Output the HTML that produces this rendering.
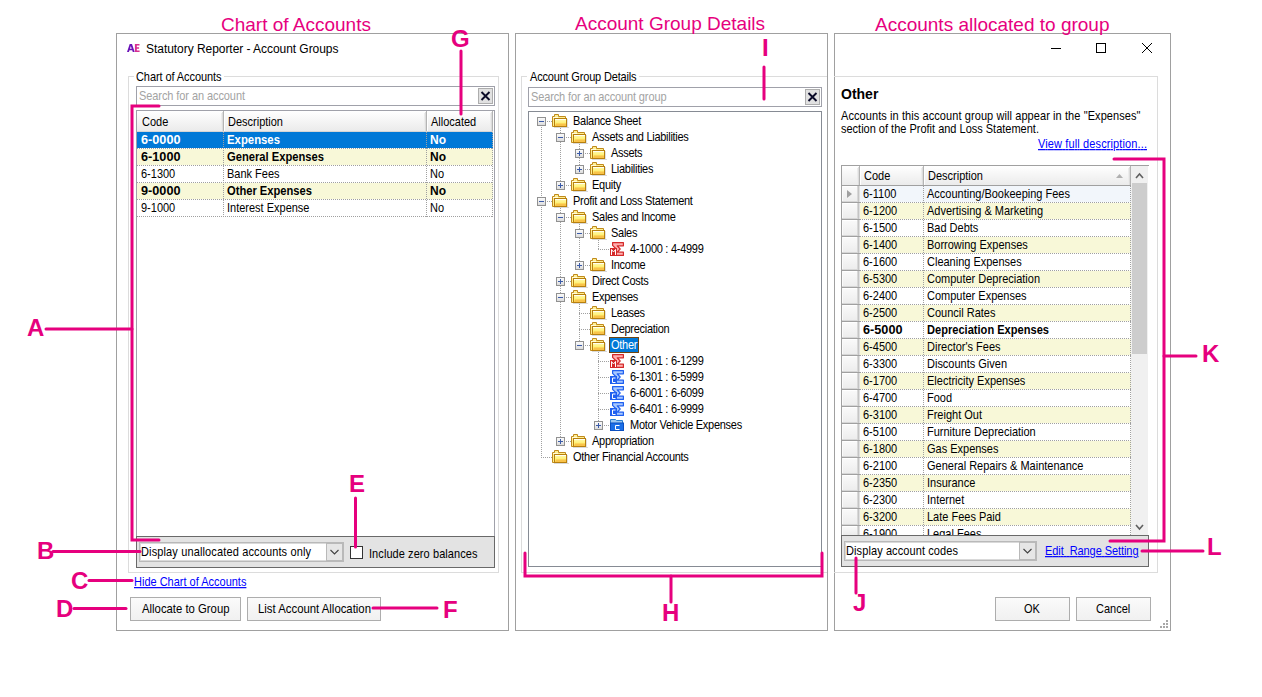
<!DOCTYPE html><html><head><meta charset="utf-8"><style>html,body{margin:0;padding:0;background:#fff;overflow:hidden}svg{display:block}text{font-family:"Liberation Sans",sans-serif;white-space:pre;text-decoration-skip-ink:none}</style></head><body>
<svg width="1262" height="697" viewBox="0 0 1262 697">
<defs><linearGradient id="btn" x1="0" y1="0" x2="0" y2="1"><stop offset="0" stop-color="#fbfbfb"/><stop offset="1" stop-color="#f0f0f0"/></linearGradient><linearGradient id="hdr" x1="0" y1="0" x2="0" y2="1"><stop offset="0" stop-color="#ffffff"/><stop offset="1" stop-color="#ebebeb"/></linearGradient><linearGradient id="rh" x1="0" y1="0" x2="0" y2="1"><stop offset="0" stop-color="#fafafa"/><stop offset="1" stop-color="#ececec"/></linearGradient><linearGradient id="exp" x1="0" y1="0" x2="0" y2="1"><stop offset="0" stop-color="#ffffff"/><stop offset="1" stop-color="#d8d8d8"/></linearGradient><linearGradient id="fold" x1="0" y1="0" x2="0" y2="1"><stop offset="0" stop-color="#fffbb8"/><stop offset="0.6" stop-color="#fff070"/><stop offset="1" stop-color="#f5c040"/></linearGradient><linearGradient id="ae" x1="0" y1="0" x2="1" y2="0"><stop offset="0" stop-color="#5a0fb4"/><stop offset="1" stop-color="#e03c8c"/></linearGradient></defs>
<rect width="1262" height="697" fill="#fff"/>
<rect x="116" y="33" width="393" height="1" fill="#a0a0a0" />
<rect x="116" y="630" width="393" height="1" fill="#a0a0a0" />
<rect x="116" y="33" width="1" height="598" fill="#a0a0a0" />
<rect x="508" y="33" width="1" height="598" fill="#a0a0a0" />
<g transform="translate(127,44)"><path fill-rule="evenodd" fill="#6a12b8" d="M0,8 L2.7,0 L5,0 L7.7,8 L5.8,8 L5.2,6.3 L2.5,6.3 L1.9,8 Z M3,4.7 L4.7,4.7 L3.85,1.9 Z"/><path fill="#d82e90" d="M7.9,0 H12.5 V1.6 H9.8 V3.2 H12.1 V4.8 H9.8 V6.4 H12.6 V8 H7.9 Z"/></g>
<text x="146" y="53" font-size="12" fill="#000" textLength="192.5">Statutory Reporter - Account Groups</text>
<rect x="128" y="76" width="371" height="1" fill="#dcdcdc" />
<rect x="128" y="76" width="1" height="497" fill="#dcdcdc" />
<rect x="498" y="76" width="1" height="497" fill="#dcdcdc" />
<rect x="128" y="572" width="371" height="1" fill="#dcdcdc" />
<rect x="134" y="70" width="90" height="12" fill="#fff" />
<text transform="translate(136,81) scale(0.9167,1)" x="0" y="0" font-size="12" fill="#000" textLength="93.27">Chart of Accounts</text>
<rect x="136" y="86" width="359" height="20" fill="#fff" />
<rect x="136" y="86" width="359" height="1" fill="#a0a1aa" />
<rect x="136" y="105" width="359" height="1" fill="#a0a1aa" />
<rect x="136" y="86" width="1" height="20" fill="#a0a1aa" />
<rect x="494" y="86" width="1" height="20" fill="#a0a1aa" />
<text transform="translate(139,100) scale(0.9167,1)" x="0" y="0" font-size="12" fill="#a3a3a3" textLength="115.64">Search for an account</text>
<rect x="478" y="88" width="15" height="16" fill="#e1e1e1" />
<rect x="478" y="88" width="15" height="1" fill="#adadad" />
<rect x="478" y="103" width="15" height="1" fill="#adadad" />
<rect x="478" y="88" width="1" height="16" fill="#adadad" />
<rect x="492" y="88" width="1" height="16" fill="#adadad" />
<path d="M481.5,92.0 L489.5,100.0 M489.5,92.0 L481.5,100.0" stroke="#0a0a28" stroke-width="1.9"/>
<rect x="136" y="110" width="359" height="427" fill="#fff" />
<rect x="136" y="110" width="359" height="1" fill="#a0a1aa" />
<rect x="136" y="536" width="359" height="1" fill="#a0a1aa" />
<rect x="136" y="110" width="1" height="427" fill="#a0a1aa" />
<rect x="494" y="110" width="1" height="427" fill="#a0a1aa" />
<rect x="137" y="111" width="356" height="20" fill="url(#hdr)" />
<rect x="137" y="131" width="356" height="1" fill="#d5d5d5" />
<rect x="221" y="113" width="1" height="17" fill="#ececec" />
<rect x="222" y="112" width="1" height="19" fill="#dcdcdc" />
<rect x="223" y="111" width="1" height="20" fill="#b4b4b4" />
<rect x="224" y="112" width="1" height="19" fill="#ffffff" />
<rect x="424" y="113" width="1" height="17" fill="#ececec" />
<rect x="425" y="112" width="1" height="19" fill="#dcdcdc" />
<rect x="426" y="111" width="1" height="20" fill="#b4b4b4" />
<rect x="427" y="112" width="1" height="19" fill="#ffffff" />
<rect x="490" y="113" width="1" height="17" fill="#ececec" />
<rect x="491" y="112" width="1" height="19" fill="#dcdcdc" />
<rect x="492" y="111" width="1" height="20" fill="#b4b4b4" />
<rect x="493" y="112" width="1" height="19" fill="#ffffff" />
<text transform="translate(142,126) scale(0.9167,1)" x="0" y="0" font-size="12" fill="#000" >Code</text>
<text transform="translate(228,126) scale(0.9167,1)" x="0" y="0" font-size="12" fill="#000" >Description</text>
<text transform="translate(431,126) scale(0.9167,1)" x="0" y="0" font-size="12" fill="#000" >Allocated</text>
<rect x="137" y="132" width="356" height="16" fill="#0078d7" />
<line x1="137" y1="148.5" x2="493" y2="148.5" stroke="#a0a0a0" stroke-width="1" stroke-dasharray="1 1"/>
<text transform="translate(141,144) scale(0.9167,1)" x="0" y="0" font-size="12" fill="#fff" font-weight="bold" textLength="43.09" lengthAdjust="spacingAndGlyphs">6-0000</text>
<text transform="translate(227,144) scale(0.9167,1)" x="0" y="0" font-size="12" fill="#fff" font-weight="bold" textLength="57.82" lengthAdjust="spacingAndGlyphs">Expenses</text>
<text transform="translate(430,144) scale(0.9167,1)" x="0" y="0" font-size="12" fill="#fff" font-weight="bold" textLength="17.45" lengthAdjust="spacingAndGlyphs">No</text>
<rect x="137" y="149" width="356" height="16" fill="#f8f8d8" />
<line x1="137" y1="165.5" x2="493" y2="165.5" stroke="#a0a0a0" stroke-width="1" stroke-dasharray="1 1"/>
<text transform="translate(141,161) scale(0.9167,1)" x="0" y="0" font-size="12" fill="#000" font-weight="bold" textLength="43.09" lengthAdjust="spacingAndGlyphs">6-1000</text>
<text transform="translate(227,161) scale(0.9167,1)" x="0" y="0" font-size="12" fill="#000" font-weight="bold" textLength="105.82" lengthAdjust="spacingAndGlyphs">General Expenses</text>
<text transform="translate(430,161) scale(0.9167,1)" x="0" y="0" font-size="12" fill="#000" font-weight="bold" textLength="17.45" lengthAdjust="spacingAndGlyphs">No</text>
<rect x="137" y="166" width="356" height="16" fill="#fff" />
<line x1="137" y1="182.5" x2="493" y2="182.5" stroke="#a0a0a0" stroke-width="1" stroke-dasharray="1 1"/>
<text transform="translate(141,178) scale(0.9167,1)" x="0" y="0" font-size="12" fill="#000" >6-1300</text>
<text transform="translate(227,178) scale(0.9167,1)" x="0" y="0" font-size="12" fill="#000" >Bank Fees</text>
<text transform="translate(430,178) scale(0.9167,1)" x="0" y="0" font-size="12" fill="#000" >No</text>
<rect x="137" y="183" width="356" height="16" fill="#f8f8d8" />
<line x1="137" y1="199.5" x2="493" y2="199.5" stroke="#a0a0a0" stroke-width="1" stroke-dasharray="1 1"/>
<text transform="translate(141,195) scale(0.9167,1)" x="0" y="0" font-size="12" fill="#000" font-weight="bold" textLength="43.09" lengthAdjust="spacingAndGlyphs">9-0000</text>
<text transform="translate(227,195) scale(0.9167,1)" x="0" y="0" font-size="12" fill="#000" font-weight="bold" textLength="92.73" lengthAdjust="spacingAndGlyphs">Other Expenses</text>
<text transform="translate(430,195) scale(0.9167,1)" x="0" y="0" font-size="12" fill="#000" font-weight="bold" textLength="17.45" lengthAdjust="spacingAndGlyphs">No</text>
<rect x="137" y="200" width="356" height="16" fill="#fff" />
<line x1="137" y1="216.5" x2="493" y2="216.5" stroke="#a0a0a0" stroke-width="1" stroke-dasharray="1 1"/>
<text transform="translate(141,212) scale(0.9167,1)" x="0" y="0" font-size="12" fill="#000" >9-1000</text>
<text transform="translate(227,212) scale(0.9167,1)" x="0" y="0" font-size="12" fill="#000" >Interest Expense</text>
<text transform="translate(430,212) scale(0.9167,1)" x="0" y="0" font-size="12" fill="#000" >No</text>
<line x1="223.5" y1="132" x2="223.5" y2="217" stroke="#a0a0a0" stroke-width="1" stroke-dasharray="1 1"/>
<line x1="426.5" y1="132" x2="426.5" y2="217" stroke="#a0a0a0" stroke-width="1" stroke-dasharray="1 1"/>
<line x1="492.5" y1="132" x2="492.5" y2="217" stroke="#a0a0a0" stroke-width="1" stroke-dasharray="1 1"/>
<rect x="136" y="536" width="359" height="32" fill="#e3e3e3" />
<rect x="136" y="536" width="359" height="1" fill="#696969" />
<rect x="136" y="567" width="359" height="1" fill="#696969" />
<rect x="136" y="536" width="1" height="32" fill="#696969" />
<rect x="494" y="536" width="1" height="32" fill="#696969" />
<rect x="139" y="542" width="205" height="20" fill="#fff" />
<rect x="139" y="542" width="205" height="1" fill="#b9b9b9" />
<rect x="139" y="561" width="205" height="1" fill="#b9b9b9" />
<rect x="139" y="542" width="1" height="20" fill="#b9b9b9" />
<rect x="343" y="542" width="1" height="20" fill="#b9b9b9" />
<rect x="140" y="543" width="203" height="1" fill="#d9d9d9" />
<rect x="140" y="560" width="203" height="1" fill="#d9d9d9" />
<rect x="140" y="543" width="1" height="18" fill="#d9d9d9" />
<rect x="342" y="543" width="1" height="18" fill="#d9d9d9" />
<rect x="326" y="543" width="17" height="18" fill="#e6e6e6" />
<rect x="326" y="543" width="17" height="1" fill="#b9b9b9" />
<rect x="326" y="560" width="17" height="1" fill="#b9b9b9" />
<rect x="326" y="543" width="1" height="18" fill="#b9b9b9" />
<rect x="342" y="543" width="1" height="18" fill="#b9b9b9" />
<path d="M330.5,550.0 L334.5,554.0 L338.5,550.0" fill="none" stroke="#404040" stroke-width="1.1"/>
<text transform="translate(141,556) scale(0.9167,1)" x="0" y="0" font-size="12" fill="#000" textLength="185.45">Display unallocated accounts only</text>
<rect x="350" y="546" width="13" height="13" fill="#fff" />
<rect x="350" y="546" width="13" height="1" fill="#333333" />
<rect x="350" y="558" width="13" height="1" fill="#333333" />
<rect x="350" y="546" width="1" height="13" fill="#333333" />
<rect x="362" y="546" width="1" height="13" fill="#333333" />
<text transform="translate(369,558) scale(0.9167,1)" x="0" y="0" font-size="12" fill="#000" textLength="118.36">Include zero balances</text>
<text transform="translate(134,586) scale(0.9167,1)" x="0" y="0" font-size="12" fill="#0000ff" text-decoration="underline">Hide Chart of Accounts</text>
<rect x="130" y="597" width="111" height="24" fill="url(#btn)"/>
<rect x="130" y="597" width="111" height="1" fill="#adadad" />
<rect x="130" y="620" width="111" height="1" fill="#adadad" />
<rect x="130" y="597" width="1" height="24" fill="#adadad" />
<rect x="240" y="597" width="1" height="24" fill="#adadad" />
<text transform="translate(142,613) scale(0.9167,1)" x="0" y="0" font-size="12" fill="#000" textLength="95.45" lengthAdjust="spacingAndGlyphs">Allocate to Group</text>
<rect x="247" y="597" width="134" height="24" fill="url(#btn)"/>
<rect x="247" y="597" width="134" height="1" fill="#adadad" />
<rect x="247" y="620" width="134" height="1" fill="#adadad" />
<rect x="247" y="597" width="1" height="24" fill="#adadad" />
<rect x="380" y="597" width="1" height="24" fill="#adadad" />
<text transform="translate(258,613) scale(0.9167,1)" x="0" y="0" font-size="12" fill="#000" textLength="123.27" lengthAdjust="spacingAndGlyphs">List Account Allocation</text>
<rect x="515" y="33" width="313" height="1" fill="#a0a0a0" />
<rect x="515" y="630" width="313" height="1" fill="#a0a0a0" />
<rect x="515" y="33" width="1" height="598" fill="#a0a0a0" />
<rect x="827" y="33" width="1" height="598" fill="#a0a0a0" />
<rect x="521" y="76" width="306" height="1" fill="#dcdcdc" />
<rect x="521" y="76" width="1" height="497" fill="#dcdcdc" />
<rect x="521" y="572" width="306" height="1" fill="#dcdcdc" />
<rect x="527" y="70" width="112" height="12" fill="#fff" />
<text transform="translate(530,81) scale(0.9167,1)" x="0" y="0" font-size="12" fill="#000" textLength="116.18">Account Group Details</text>
<rect x="528" y="87" width="294" height="20" fill="#fff" />
<rect x="528" y="87" width="294" height="1" fill="#a0a1aa" />
<rect x="528" y="106" width="294" height="1" fill="#a0a1aa" />
<rect x="528" y="87" width="1" height="20" fill="#a0a1aa" />
<rect x="821" y="87" width="1" height="20" fill="#a0a1aa" />
<text transform="translate(531,101) scale(0.9167,1)" x="0" y="0" font-size="12" fill="#a3a3a3" textLength="147.82">Search for an account group</text>
<rect x="805" y="89" width="15" height="16" fill="#e1e1e1" />
<rect x="805" y="89" width="15" height="1" fill="#adadad" />
<rect x="805" y="104" width="15" height="1" fill="#adadad" />
<rect x="805" y="89" width="1" height="16" fill="#adadad" />
<rect x="819" y="89" width="1" height="16" fill="#adadad" />
<path d="M808.5,93.0 L816.5,101.0 M816.5,93.0 L808.5,101.0" stroke="#0a0a28" stroke-width="1.9"/>
<rect x="528" y="111" width="294" height="456" fill="#fff" />
<rect x="528" y="111" width="294" height="1" fill="#868b94" />
<rect x="528" y="566" width="294" height="1" fill="#868b94" />
<rect x="528" y="111" width="1" height="456" fill="#868b94" />
<rect x="821" y="111" width="1" height="456" fill="#868b94" />
<line x1="541.5" y1="121" x2="541.5" y2="457" stroke="#a0a0a0" stroke-width="1" stroke-dasharray="1 1"/>
<line x1="560.5" y1="128" x2="560.5" y2="186" stroke="#a0a0a0" stroke-width="1" stroke-dasharray="1 1"/>
<line x1="579.5" y1="144" x2="579.5" y2="170" stroke="#a0a0a0" stroke-width="1" stroke-dasharray="1 1"/>
<line x1="560.5" y1="208" x2="560.5" y2="442" stroke="#a0a0a0" stroke-width="1" stroke-dasharray="1 1"/>
<line x1="579.5" y1="224" x2="579.5" y2="266" stroke="#a0a0a0" stroke-width="1" stroke-dasharray="1 1"/>
<line x1="598.5" y1="240" x2="598.5" y2="250" stroke="#a0a0a0" stroke-width="1" stroke-dasharray="1 1"/>
<line x1="579.5" y1="304" x2="579.5" y2="346" stroke="#a0a0a0" stroke-width="1" stroke-dasharray="1 1"/>
<line x1="598.5" y1="352" x2="598.5" y2="426" stroke="#a0a0a0" stroke-width="1" stroke-dasharray="1 1"/>
<line x1="541" y1="121.5" x2="552" y2="121.5" stroke="#a0a0a0" stroke-width="1" stroke-dasharray="1 1"/>
<rect x="537" y="117" width="9" height="9" fill="url(#exp)"/>
<rect x="537" y="117" width="9" height="1" fill="#919191" />
<rect x="537" y="125" width="9" height="1" fill="#919191" />
<rect x="537" y="117" width="1" height="9" fill="#919191" />
<rect x="545" y="117" width="1" height="9" fill="#919191" />
<rect x="539" y="121" width="5" height="1" fill="#3b5ba8" />
<g transform="translate(552,114)"><rect x="2" y="13" width="15" height="1" fill="#000" opacity="0.15"/><rect x="15" y="5" width="1" height="8" fill="#000" opacity="0.12"/><path d="M0.5,2.5 h2 v-2 h4 v2 h7 v10 h-13 z" fill="#ffef90" stroke="#c08a1c" stroke-width="1"/><rect x="1" y="3" width="5" height="1" fill="#fffbe0"/><rect x="2.5" y="4.5" width="12" height="8" fill="url(#fold)" stroke="#b8800e" stroke-width="1"/><rect x="3" y="5" width="11" height="1" fill="#fffef0"/><rect x="4" y="9.5" width="10" height="2.5" fill="#f9c34a"/></g>
<text transform="translate(573,125) scale(0.9167,1)" x="0" y="0" font-size="12" fill="#000" letter-spacing="-0.3">Balance Sheet</text>
<line x1="560" y1="137.5" x2="571" y2="137.5" stroke="#a0a0a0" stroke-width="1" stroke-dasharray="1 1"/>
<rect x="556" y="133" width="9" height="9" fill="url(#exp)"/>
<rect x="556" y="133" width="9" height="1" fill="#919191" />
<rect x="556" y="141" width="9" height="1" fill="#919191" />
<rect x="556" y="133" width="1" height="9" fill="#919191" />
<rect x="564" y="133" width="1" height="9" fill="#919191" />
<rect x="558" y="137" width="5" height="1" fill="#3b5ba8" />
<g transform="translate(571,130)"><rect x="2" y="13" width="15" height="1" fill="#000" opacity="0.15"/><rect x="15" y="5" width="1" height="8" fill="#000" opacity="0.12"/><path d="M0.5,2.5 h2 v-2 h4 v2 h7 v10 h-13 z" fill="#ffef90" stroke="#c08a1c" stroke-width="1"/><rect x="1" y="3" width="5" height="1" fill="#fffbe0"/><rect x="2.5" y="4.5" width="12" height="8" fill="url(#fold)" stroke="#b8800e" stroke-width="1"/><rect x="3" y="5" width="11" height="1" fill="#fffef0"/><rect x="4" y="9.5" width="10" height="2.5" fill="#f9c34a"/></g>
<text transform="translate(592,141) scale(0.9167,1)" x="0" y="0" font-size="12" fill="#000" letter-spacing="-0.3">Assets and Liabilities</text>
<line x1="579" y1="153.5" x2="590" y2="153.5" stroke="#a0a0a0" stroke-width="1" stroke-dasharray="1 1"/>
<rect x="575" y="149" width="9" height="9" fill="url(#exp)"/>
<rect x="575" y="149" width="9" height="1" fill="#919191" />
<rect x="575" y="157" width="9" height="1" fill="#919191" />
<rect x="575" y="149" width="1" height="9" fill="#919191" />
<rect x="583" y="149" width="1" height="9" fill="#919191" />
<rect x="577" y="153" width="5" height="1" fill="#3b5ba8" />
<rect x="579" y="151" width="1" height="5" fill="#3b5ba8" />
<g transform="translate(590,146)"><rect x="2" y="13" width="15" height="1" fill="#000" opacity="0.15"/><rect x="15" y="5" width="1" height="8" fill="#000" opacity="0.12"/><path d="M0.5,2.5 h2 v-2 h4 v2 h7 v10 h-13 z" fill="#ffef90" stroke="#c08a1c" stroke-width="1"/><rect x="1" y="3" width="5" height="1" fill="#fffbe0"/><rect x="2.5" y="4.5" width="12" height="8" fill="url(#fold)" stroke="#b8800e" stroke-width="1"/><rect x="3" y="5" width="11" height="1" fill="#fffef0"/><rect x="4" y="9.5" width="10" height="2.5" fill="#f9c34a"/></g>
<text transform="translate(611,157) scale(0.9167,1)" x="0" y="0" font-size="12" fill="#000" letter-spacing="-0.3">Assets</text>
<line x1="579" y1="169.5" x2="590" y2="169.5" stroke="#a0a0a0" stroke-width="1" stroke-dasharray="1 1"/>
<rect x="575" y="165" width="9" height="9" fill="url(#exp)"/>
<rect x="575" y="165" width="9" height="1" fill="#919191" />
<rect x="575" y="173" width="9" height="1" fill="#919191" />
<rect x="575" y="165" width="1" height="9" fill="#919191" />
<rect x="583" y="165" width="1" height="9" fill="#919191" />
<rect x="577" y="169" width="5" height="1" fill="#3b5ba8" />
<rect x="579" y="167" width="1" height="5" fill="#3b5ba8" />
<g transform="translate(590,162)"><rect x="2" y="13" width="15" height="1" fill="#000" opacity="0.15"/><rect x="15" y="5" width="1" height="8" fill="#000" opacity="0.12"/><path d="M0.5,2.5 h2 v-2 h4 v2 h7 v10 h-13 z" fill="#ffef90" stroke="#c08a1c" stroke-width="1"/><rect x="1" y="3" width="5" height="1" fill="#fffbe0"/><rect x="2.5" y="4.5" width="12" height="8" fill="url(#fold)" stroke="#b8800e" stroke-width="1"/><rect x="3" y="5" width="11" height="1" fill="#fffef0"/><rect x="4" y="9.5" width="10" height="2.5" fill="#f9c34a"/></g>
<text transform="translate(611,173) scale(0.9167,1)" x="0" y="0" font-size="12" fill="#000" letter-spacing="-0.3">Liabilities</text>
<line x1="560" y1="185.5" x2="571" y2="185.5" stroke="#a0a0a0" stroke-width="1" stroke-dasharray="1 1"/>
<rect x="556" y="181" width="9" height="9" fill="url(#exp)"/>
<rect x="556" y="181" width="9" height="1" fill="#919191" />
<rect x="556" y="189" width="9" height="1" fill="#919191" />
<rect x="556" y="181" width="1" height="9" fill="#919191" />
<rect x="564" y="181" width="1" height="9" fill="#919191" />
<rect x="558" y="185" width="5" height="1" fill="#3b5ba8" />
<rect x="560" y="183" width="1" height="5" fill="#3b5ba8" />
<g transform="translate(571,178)"><rect x="2" y="13" width="15" height="1" fill="#000" opacity="0.15"/><rect x="15" y="5" width="1" height="8" fill="#000" opacity="0.12"/><path d="M0.5,2.5 h2 v-2 h4 v2 h7 v10 h-13 z" fill="#ffef90" stroke="#c08a1c" stroke-width="1"/><rect x="1" y="3" width="5" height="1" fill="#fffbe0"/><rect x="2.5" y="4.5" width="12" height="8" fill="url(#fold)" stroke="#b8800e" stroke-width="1"/><rect x="3" y="5" width="11" height="1" fill="#fffef0"/><rect x="4" y="9.5" width="10" height="2.5" fill="#f9c34a"/></g>
<text transform="translate(592,189) scale(0.9167,1)" x="0" y="0" font-size="12" fill="#000" letter-spacing="-0.3">Equity</text>
<line x1="541" y1="201.5" x2="552" y2="201.5" stroke="#a0a0a0" stroke-width="1" stroke-dasharray="1 1"/>
<rect x="537" y="197" width="9" height="9" fill="url(#exp)"/>
<rect x="537" y="197" width="9" height="1" fill="#919191" />
<rect x="537" y="205" width="9" height="1" fill="#919191" />
<rect x="537" y="197" width="1" height="9" fill="#919191" />
<rect x="545" y="197" width="1" height="9" fill="#919191" />
<rect x="539" y="201" width="5" height="1" fill="#3b5ba8" />
<g transform="translate(552,194)"><rect x="2" y="13" width="15" height="1" fill="#000" opacity="0.15"/><rect x="15" y="5" width="1" height="8" fill="#000" opacity="0.12"/><path d="M0.5,2.5 h2 v-2 h4 v2 h7 v10 h-13 z" fill="#ffef90" stroke="#c08a1c" stroke-width="1"/><rect x="1" y="3" width="5" height="1" fill="#fffbe0"/><rect x="2.5" y="4.5" width="12" height="8" fill="url(#fold)" stroke="#b8800e" stroke-width="1"/><rect x="3" y="5" width="11" height="1" fill="#fffef0"/><rect x="4" y="9.5" width="10" height="2.5" fill="#f9c34a"/></g>
<text transform="translate(573,205) scale(0.9167,1)" x="0" y="0" font-size="12" fill="#000" letter-spacing="-0.3">Profit and Loss Statement</text>
<line x1="560" y1="217.5" x2="571" y2="217.5" stroke="#a0a0a0" stroke-width="1" stroke-dasharray="1 1"/>
<rect x="556" y="213" width="9" height="9" fill="url(#exp)"/>
<rect x="556" y="213" width="9" height="1" fill="#919191" />
<rect x="556" y="221" width="9" height="1" fill="#919191" />
<rect x="556" y="213" width="1" height="9" fill="#919191" />
<rect x="564" y="213" width="1" height="9" fill="#919191" />
<rect x="558" y="217" width="5" height="1" fill="#3b5ba8" />
<g transform="translate(571,210)"><rect x="2" y="13" width="15" height="1" fill="#000" opacity="0.15"/><rect x="15" y="5" width="1" height="8" fill="#000" opacity="0.12"/><path d="M0.5,2.5 h2 v-2 h4 v2 h7 v10 h-13 z" fill="#ffef90" stroke="#c08a1c" stroke-width="1"/><rect x="1" y="3" width="5" height="1" fill="#fffbe0"/><rect x="2.5" y="4.5" width="12" height="8" fill="url(#fold)" stroke="#b8800e" stroke-width="1"/><rect x="3" y="5" width="11" height="1" fill="#fffef0"/><rect x="4" y="9.5" width="10" height="2.5" fill="#f9c34a"/></g>
<text transform="translate(592,221) scale(0.9167,1)" x="0" y="0" font-size="12" fill="#000" letter-spacing="-0.3">Sales and Income</text>
<line x1="579" y1="233.5" x2="590" y2="233.5" stroke="#a0a0a0" stroke-width="1" stroke-dasharray="1 1"/>
<rect x="575" y="229" width="9" height="9" fill="url(#exp)"/>
<rect x="575" y="229" width="9" height="1" fill="#919191" />
<rect x="575" y="237" width="9" height="1" fill="#919191" />
<rect x="575" y="229" width="1" height="9" fill="#919191" />
<rect x="583" y="229" width="1" height="9" fill="#919191" />
<rect x="577" y="233" width="5" height="1" fill="#3b5ba8" />
<g transform="translate(590,226)"><rect x="2" y="13" width="15" height="1" fill="#000" opacity="0.15"/><rect x="15" y="5" width="1" height="8" fill="#000" opacity="0.12"/><path d="M0.5,2.5 h2 v-2 h4 v2 h7 v10 h-13 z" fill="#ffef90" stroke="#c08a1c" stroke-width="1"/><rect x="1" y="3" width="5" height="1" fill="#fffbe0"/><rect x="2.5" y="4.5" width="12" height="8" fill="url(#fold)" stroke="#b8800e" stroke-width="1"/><rect x="3" y="5" width="11" height="1" fill="#fffef0"/><rect x="4" y="9.5" width="10" height="2.5" fill="#f9c34a"/></g>
<text transform="translate(611,237) scale(0.9167,1)" x="0" y="0" font-size="12" fill="#000" letter-spacing="-0.3">Sales</text>
<line x1="598" y1="249.5" x2="609" y2="249.5" stroke="#a0a0a0" stroke-width="1" stroke-dasharray="1 1"/>
<g transform="translate(610,242)"><path d="M2.6,0.6 H13.4 V3.8 H7.2 L10.2,7 L7.2,10.2 H13.4 V13.4 H3 L6.2,7 L2.6,3.4 Z" fill="#ffb0b0" stroke="#d42a2a" stroke-width="1.2" stroke-linejoin="round"/><rect x="0" y="6" width="7" height="8" fill="#d42a2a"/><path d="M1.5,13 V7.5 L3.5,10 L5.5,7.5 V13" fill="none" stroke="#fff" stroke-width="1"/></g>
<text transform="translate(630,253) scale(0.9167,1)" x="0" y="0" font-size="12" fill="#000" letter-spacing="-0.3">4-1000 : 4-4999</text>
<line x1="579" y1="265.5" x2="590" y2="265.5" stroke="#a0a0a0" stroke-width="1" stroke-dasharray="1 1"/>
<rect x="575" y="261" width="9" height="9" fill="url(#exp)"/>
<rect x="575" y="261" width="9" height="1" fill="#919191" />
<rect x="575" y="269" width="9" height="1" fill="#919191" />
<rect x="575" y="261" width="1" height="9" fill="#919191" />
<rect x="583" y="261" width="1" height="9" fill="#919191" />
<rect x="577" y="265" width="5" height="1" fill="#3b5ba8" />
<rect x="579" y="263" width="1" height="5" fill="#3b5ba8" />
<g transform="translate(590,258)"><rect x="2" y="13" width="15" height="1" fill="#000" opacity="0.15"/><rect x="15" y="5" width="1" height="8" fill="#000" opacity="0.12"/><path d="M0.5,2.5 h2 v-2 h4 v2 h7 v10 h-13 z" fill="#ffef90" stroke="#c08a1c" stroke-width="1"/><rect x="1" y="3" width="5" height="1" fill="#fffbe0"/><rect x="2.5" y="4.5" width="12" height="8" fill="url(#fold)" stroke="#b8800e" stroke-width="1"/><rect x="3" y="5" width="11" height="1" fill="#fffef0"/><rect x="4" y="9.5" width="10" height="2.5" fill="#f9c34a"/></g>
<text transform="translate(611,269) scale(0.9167,1)" x="0" y="0" font-size="12" fill="#000" letter-spacing="-0.3">Income</text>
<line x1="560" y1="281.5" x2="571" y2="281.5" stroke="#a0a0a0" stroke-width="1" stroke-dasharray="1 1"/>
<rect x="556" y="277" width="9" height="9" fill="url(#exp)"/>
<rect x="556" y="277" width="9" height="1" fill="#919191" />
<rect x="556" y="285" width="9" height="1" fill="#919191" />
<rect x="556" y="277" width="1" height="9" fill="#919191" />
<rect x="564" y="277" width="1" height="9" fill="#919191" />
<rect x="558" y="281" width="5" height="1" fill="#3b5ba8" />
<rect x="560" y="279" width="1" height="5" fill="#3b5ba8" />
<g transform="translate(571,274)"><rect x="2" y="13" width="15" height="1" fill="#000" opacity="0.15"/><rect x="15" y="5" width="1" height="8" fill="#000" opacity="0.12"/><path d="M0.5,2.5 h2 v-2 h4 v2 h7 v10 h-13 z" fill="#ffef90" stroke="#c08a1c" stroke-width="1"/><rect x="1" y="3" width="5" height="1" fill="#fffbe0"/><rect x="2.5" y="4.5" width="12" height="8" fill="url(#fold)" stroke="#b8800e" stroke-width="1"/><rect x="3" y="5" width="11" height="1" fill="#fffef0"/><rect x="4" y="9.5" width="10" height="2.5" fill="#f9c34a"/></g>
<text transform="translate(592,285) scale(0.9167,1)" x="0" y="0" font-size="12" fill="#000" letter-spacing="-0.3">Direct Costs</text>
<line x1="560" y1="297.5" x2="571" y2="297.5" stroke="#a0a0a0" stroke-width="1" stroke-dasharray="1 1"/>
<rect x="556" y="293" width="9" height="9" fill="url(#exp)"/>
<rect x="556" y="293" width="9" height="1" fill="#919191" />
<rect x="556" y="301" width="9" height="1" fill="#919191" />
<rect x="556" y="293" width="1" height="9" fill="#919191" />
<rect x="564" y="293" width="1" height="9" fill="#919191" />
<rect x="558" y="297" width="5" height="1" fill="#3b5ba8" />
<g transform="translate(571,290)"><rect x="2" y="13" width="15" height="1" fill="#000" opacity="0.15"/><rect x="15" y="5" width="1" height="8" fill="#000" opacity="0.12"/><path d="M0.5,2.5 h2 v-2 h4 v2 h7 v10 h-13 z" fill="#ffef90" stroke="#c08a1c" stroke-width="1"/><rect x="1" y="3" width="5" height="1" fill="#fffbe0"/><rect x="2.5" y="4.5" width="12" height="8" fill="url(#fold)" stroke="#b8800e" stroke-width="1"/><rect x="3" y="5" width="11" height="1" fill="#fffef0"/><rect x="4" y="9.5" width="10" height="2.5" fill="#f9c34a"/></g>
<text transform="translate(592,301) scale(0.9167,1)" x="0" y="0" font-size="12" fill="#000" letter-spacing="-0.3">Expenses</text>
<line x1="579" y1="313.5" x2="590" y2="313.5" stroke="#a0a0a0" stroke-width="1" stroke-dasharray="1 1"/>
<g transform="translate(590,306)"><rect x="2" y="13" width="15" height="1" fill="#000" opacity="0.15"/><rect x="15" y="5" width="1" height="8" fill="#000" opacity="0.12"/><path d="M0.5,2.5 h2 v-2 h4 v2 h7 v10 h-13 z" fill="#ffef90" stroke="#c08a1c" stroke-width="1"/><rect x="1" y="3" width="5" height="1" fill="#fffbe0"/><rect x="2.5" y="4.5" width="12" height="8" fill="url(#fold)" stroke="#b8800e" stroke-width="1"/><rect x="3" y="5" width="11" height="1" fill="#fffef0"/><rect x="4" y="9.5" width="10" height="2.5" fill="#f9c34a"/></g>
<text transform="translate(611,317) scale(0.9167,1)" x="0" y="0" font-size="12" fill="#000" letter-spacing="-0.3">Leases</text>
<line x1="579" y1="329.5" x2="590" y2="329.5" stroke="#a0a0a0" stroke-width="1" stroke-dasharray="1 1"/>
<g transform="translate(590,322)"><rect x="2" y="13" width="15" height="1" fill="#000" opacity="0.15"/><rect x="15" y="5" width="1" height="8" fill="#000" opacity="0.12"/><path d="M0.5,2.5 h2 v-2 h4 v2 h7 v10 h-13 z" fill="#ffef90" stroke="#c08a1c" stroke-width="1"/><rect x="1" y="3" width="5" height="1" fill="#fffbe0"/><rect x="2.5" y="4.5" width="12" height="8" fill="url(#fold)" stroke="#b8800e" stroke-width="1"/><rect x="3" y="5" width="11" height="1" fill="#fffef0"/><rect x="4" y="9.5" width="10" height="2.5" fill="#f9c34a"/></g>
<text transform="translate(611,333) scale(0.9167,1)" x="0" y="0" font-size="12" fill="#000" letter-spacing="-0.3">Depreciation</text>
<line x1="579" y1="345.5" x2="590" y2="345.5" stroke="#a0a0a0" stroke-width="1" stroke-dasharray="1 1"/>
<rect x="575" y="341" width="9" height="9" fill="url(#exp)"/>
<rect x="575" y="341" width="9" height="1" fill="#919191" />
<rect x="575" y="349" width="9" height="1" fill="#919191" />
<rect x="575" y="341" width="1" height="9" fill="#919191" />
<rect x="583" y="341" width="1" height="9" fill="#919191" />
<rect x="577" y="345" width="5" height="1" fill="#3b5ba8" />
<g transform="translate(590,338)"><rect x="2" y="13" width="15" height="1" fill="#000" opacity="0.15"/><rect x="15" y="5" width="1" height="8" fill="#000" opacity="0.12"/><path d="M0.5,2.5 h2 v-2 h4 v2 h7 v10 h-13 z" fill="#ffef90" stroke="#c08a1c" stroke-width="1"/><rect x="1" y="3" width="5" height="1" fill="#fffbe0"/><rect x="2.5" y="4.5" width="12" height="8" fill="url(#fold)" stroke="#b8800e" stroke-width="1"/><rect x="3" y="5" width="11" height="1" fill="#fffef0"/><rect x="4" y="9.5" width="10" height="2.5" fill="#f9c34a"/></g>
<rect x="609" y="337" width="30" height="16" fill="#0078d7" />
<rect x="609.5" y="337.5" width="29" height="15" fill="none" stroke="#e08a20" stroke-width="1"/>
<rect x="609.5" y="337.5" width="29" height="15" fill="none" stroke="#000" stroke-width="1" stroke-dasharray="1 1"/>
<text transform="translate(611,349) scale(0.9167,1)" x="0" y="0" font-size="12" fill="#fff" letter-spacing="-0.3">Other</text>
<line x1="598" y1="361.5" x2="609" y2="361.5" stroke="#a0a0a0" stroke-width="1" stroke-dasharray="1 1"/>
<g transform="translate(610,354)"><path d="M2.6,0.6 H13.4 V3.8 H7.2 L10.2,7 L7.2,10.2 H13.4 V13.4 H3 L6.2,7 L2.6,3.4 Z" fill="#ffb0b0" stroke="#d42a2a" stroke-width="1.2" stroke-linejoin="round"/><rect x="0" y="6" width="7" height="8" fill="#d42a2a"/><path d="M1.5,13 V7.5 L3.5,10 L5.5,7.5 V13" fill="none" stroke="#fff" stroke-width="1"/></g>
<text transform="translate(630,365) scale(0.9167,1)" x="0" y="0" font-size="12" fill="#000" letter-spacing="-0.3">6-1001 : 6-1299</text>
<line x1="598" y1="377.5" x2="609" y2="377.5" stroke="#a0a0a0" stroke-width="1" stroke-dasharray="1 1"/>
<g transform="translate(610,370)"><path d="M2.6,0.6 H13.4 V3.8 H7.2 L10.2,7 L7.2,10.2 H13.4 V13.4 H3 L6.2,7 L2.6,3.4 Z" fill="#a8c8ff" stroke="#2060f0" stroke-width="1.2" stroke-linejoin="round"/><rect x="0" y="6" width="7" height="8" fill="#2060f0"/><path d="M5.5,8 H2.5 V12.5 H5.5" fill="none" stroke="#fff" stroke-width="1"/></g>
<text transform="translate(630,381) scale(0.9167,1)" x="0" y="0" font-size="12" fill="#000" letter-spacing="-0.3">6-1301 : 6-5999</text>
<line x1="598" y1="393.5" x2="609" y2="393.5" stroke="#a0a0a0" stroke-width="1" stroke-dasharray="1 1"/>
<g transform="translate(610,386)"><path d="M2.6,0.6 H13.4 V3.8 H7.2 L10.2,7 L7.2,10.2 H13.4 V13.4 H3 L6.2,7 L2.6,3.4 Z" fill="#a8c8ff" stroke="#2060f0" stroke-width="1.2" stroke-linejoin="round"/><rect x="0" y="6" width="7" height="8" fill="#2060f0"/><path d="M5.5,8 H2.5 V12.5 H5.5" fill="none" stroke="#fff" stroke-width="1"/></g>
<text transform="translate(630,397) scale(0.9167,1)" x="0" y="0" font-size="12" fill="#000" letter-spacing="-0.3">6-6001 : 6-6099</text>
<line x1="598" y1="409.5" x2="609" y2="409.5" stroke="#a0a0a0" stroke-width="1" stroke-dasharray="1 1"/>
<g transform="translate(610,402)"><path d="M2.6,0.6 H13.4 V3.8 H7.2 L10.2,7 L7.2,10.2 H13.4 V13.4 H3 L6.2,7 L2.6,3.4 Z" fill="#a8c8ff" stroke="#2060f0" stroke-width="1.2" stroke-linejoin="round"/><rect x="0" y="6" width="7" height="8" fill="#2060f0"/><path d="M5.5,8 H2.5 V12.5 H5.5" fill="none" stroke="#fff" stroke-width="1"/></g>
<text transform="translate(630,413) scale(0.9167,1)" x="0" y="0" font-size="12" fill="#000" letter-spacing="-0.3">6-6401 : 6-9999</text>
<line x1="598" y1="425.5" x2="609" y2="425.5" stroke="#a0a0a0" stroke-width="1" stroke-dasharray="1 1"/>
<rect x="594" y="421" width="9" height="9" fill="url(#exp)"/>
<rect x="594" y="421" width="9" height="1" fill="#919191" />
<rect x="594" y="429" width="9" height="1" fill="#919191" />
<rect x="594" y="421" width="1" height="9" fill="#919191" />
<rect x="602" y="421" width="1" height="9" fill="#919191" />
<rect x="596" y="425" width="5" height="1" fill="#3b5ba8" />
<rect x="598" y="423" width="1" height="5" fill="#3b5ba8" />
<g transform="translate(610,418)"><path d="M0.5,1.5 h5 l1,1 h6 v10 h-12 z" fill="#9cc8f0" stroke="#2a7fd0" stroke-width="1"/><rect x="0.5" y="5" width="13" height="7.5" fill="#1a6fe8" stroke="#0b4fc0" stroke-width="1"/><path d="M9.5,7.5 H5.5 V11.5 H9.5" fill="none" stroke="#fff" stroke-width="1"/></g>
<text transform="translate(630,429) scale(0.9167,1)" x="0" y="0" font-size="12" fill="#000" letter-spacing="-0.3">Motor Vehicle Expenses</text>
<line x1="560" y1="441.5" x2="571" y2="441.5" stroke="#a0a0a0" stroke-width="1" stroke-dasharray="1 1"/>
<rect x="556" y="437" width="9" height="9" fill="url(#exp)"/>
<rect x="556" y="437" width="9" height="1" fill="#919191" />
<rect x="556" y="445" width="9" height="1" fill="#919191" />
<rect x="556" y="437" width="1" height="9" fill="#919191" />
<rect x="564" y="437" width="1" height="9" fill="#919191" />
<rect x="558" y="441" width="5" height="1" fill="#3b5ba8" />
<rect x="560" y="439" width="1" height="5" fill="#3b5ba8" />
<g transform="translate(571,434)"><rect x="2" y="13" width="15" height="1" fill="#000" opacity="0.15"/><rect x="15" y="5" width="1" height="8" fill="#000" opacity="0.12"/><path d="M0.5,2.5 h2 v-2 h4 v2 h7 v10 h-13 z" fill="#ffef90" stroke="#c08a1c" stroke-width="1"/><rect x="1" y="3" width="5" height="1" fill="#fffbe0"/><rect x="2.5" y="4.5" width="12" height="8" fill="url(#fold)" stroke="#b8800e" stroke-width="1"/><rect x="3" y="5" width="11" height="1" fill="#fffef0"/><rect x="4" y="9.5" width="10" height="2.5" fill="#f9c34a"/></g>
<text transform="translate(592,445) scale(0.9167,1)" x="0" y="0" font-size="12" fill="#000" letter-spacing="-0.3">Appropriation</text>
<line x1="541" y1="457.5" x2="552" y2="457.5" stroke="#a0a0a0" stroke-width="1" stroke-dasharray="1 1"/>
<g transform="translate(552,450)"><rect x="2" y="13" width="15" height="1" fill="#000" opacity="0.15"/><rect x="15" y="5" width="1" height="8" fill="#000" opacity="0.12"/><path d="M0.5,2.5 h2 v-2 h4 v2 h7 v10 h-13 z" fill="#ffef90" stroke="#c08a1c" stroke-width="1"/><rect x="1" y="3" width="5" height="1" fill="#fffbe0"/><rect x="2.5" y="4.5" width="12" height="8" fill="url(#fold)" stroke="#b8800e" stroke-width="1"/><rect x="3" y="5" width="11" height="1" fill="#fffef0"/><rect x="4" y="9.5" width="10" height="2.5" fill="#f9c34a"/></g>
<text transform="translate(573,461) scale(0.9167,1)" x="0" y="0" font-size="12" fill="#000" letter-spacing="-0.3">Other Financial Accounts</text>
<rect x="834" y="33" width="337" height="1" fill="#a0a0a0" />
<rect x="834" y="630" width="337" height="1" fill="#a0a0a0" />
<rect x="834" y="33" width="1" height="598" fill="#a0a0a0" />
<rect x="1170" y="33" width="1" height="598" fill="#a0a0a0" />
<rect x="1051" y="48" width="10" height="1" fill="#000" />
<rect x="1096" y="43" width="10" height="1" fill="#000" />
<rect x="1096" y="52" width="10" height="1" fill="#000" />
<rect x="1096" y="43" width="1" height="10" fill="#000" />
<rect x="1105" y="43" width="1" height="10" fill="#000" />
<path d="M1142,43 L1152,53 M1152,43 L1142,53" stroke="#000" stroke-width="1"/>
<rect x="834" y="76" width="324" height="1" fill="#dcdcdc" />
<rect x="1157" y="76" width="1" height="497" fill="#dcdcdc" />
<rect x="834" y="572" width="324" height="1" fill="#dcdcdc" />
<text x="841" y="99" font-size="14" fill="#000" font-weight="bold" >Other</text>
<text transform="translate(841,120) scale(0.9167,1)" x="0" y="0" font-size="12" fill="#000" textLength="326.73">Accounts in this account group will appear in the "Expenses"</text>
<text transform="translate(841,133) scale(0.9167,1)" x="0" y="0" font-size="12" fill="#000" >section of the Profit and Loss Statement.</text>
<text transform="translate(1038,148) scale(0.9167,1)" x="0" y="0" font-size="12" fill="#0000ff" text-decoration="underline" textLength="118.91">View full description...</text>
<rect x="841" y="165" width="308" height="371" fill="#fff" />
<rect x="841" y="165" width="308" height="1" fill="#a0a0a0" />
<rect x="841" y="165" width="1" height="371" fill="#a0a0a0" />
<rect x="842" y="166" width="289" height="19" fill="url(#hdr)" />
<rect x="842" y="185" width="289" height="1" fill="#a0a0a0" />
<rect x="857" y="168" width="1" height="16" fill="#ececec" />
<rect x="858" y="167" width="1" height="18" fill="#dcdcdc" />
<rect x="859" y="166" width="1" height="19" fill="#b4b4b4" />
<rect x="860" y="167" width="1" height="18" fill="#ffffff" />
<rect x="921" y="168" width="1" height="16" fill="#ececec" />
<rect x="922" y="167" width="1" height="18" fill="#dcdcdc" />
<rect x="923" y="166" width="1" height="19" fill="#b4b4b4" />
<rect x="924" y="167" width="1" height="18" fill="#ffffff" />
<rect x="1128" y="168" width="1" height="16" fill="#ececec" />
<rect x="1129" y="167" width="1" height="18" fill="#dcdcdc" />
<rect x="1130" y="166" width="1" height="19" fill="#b4b4b4" />
<rect x="1131" y="167" width="1" height="18" fill="#ffffff" />
<text transform="translate(864,180) scale(0.9167,1)" x="0" y="0" font-size="12" fill="#000" >Code</text>
<text transform="translate(928,180) scale(0.9167,1)" x="0" y="0" font-size="12" fill="#000" >Description</text>
<path d="M1116,178 L1119.5,174 L1123,178 z" fill="#b0b0b0"/>
<rect x="860" y="186" width="271" height="16" fill="#f2f6fb" />
<rect x="842" y="186" width="18" height="16" fill="url(#rh)" />
<rect x="842" y="186" width="16" height="1" fill="#ffffff" />
<rect x="842" y="186" width="1" height="16" fill="#fbfbfb" />
<rect x="857" y="186" width="1" height="16" fill="#d8d8d8" />
<rect x="858" y="186" width="1" height="16" fill="#c4c4c4" />
<rect x="859" y="186" width="1" height="16" fill="#e0e0e0" />
<rect x="842" y="201" width="16" height="1" fill="#d6d6d6" />
<rect x="842" y="202" width="18" height="1" fill="#a0a0a0" />
<line x1="860" y1="202.5" x2="1131" y2="202.5" stroke="#a0a0a0" stroke-width="1" stroke-dasharray="1 1"/>
<text transform="translate(863,198) scale(0.9167,1)" x="0" y="0" font-size="12" fill="#000" >6-1100</text>
<text transform="translate(927,198) scale(0.9167,1)" x="0" y="0" font-size="12" fill="#000" >Accounting/Bookeeping Fees</text>
<rect x="860" y="203" width="271" height="16" fill="#f8f8d8" />
<rect x="842" y="203" width="18" height="16" fill="url(#rh)" />
<rect x="842" y="203" width="16" height="1" fill="#ffffff" />
<rect x="842" y="203" width="1" height="16" fill="#fbfbfb" />
<rect x="857" y="203" width="1" height="16" fill="#d8d8d8" />
<rect x="858" y="203" width="1" height="16" fill="#c4c4c4" />
<rect x="859" y="203" width="1" height="16" fill="#e0e0e0" />
<rect x="842" y="218" width="16" height="1" fill="#d6d6d6" />
<rect x="842" y="219" width="18" height="1" fill="#a0a0a0" />
<line x1="860" y1="219.5" x2="1131" y2="219.5" stroke="#a0a0a0" stroke-width="1" stroke-dasharray="1 1"/>
<text transform="translate(863,215) scale(0.9167,1)" x="0" y="0" font-size="12" fill="#000" >6-1200</text>
<text transform="translate(927,215) scale(0.9167,1)" x="0" y="0" font-size="12" fill="#000" >Advertising &amp; Marketing</text>
<rect x="860" y="220" width="271" height="16" fill="#fff" />
<rect x="842" y="220" width="18" height="16" fill="url(#rh)" />
<rect x="842" y="220" width="16" height="1" fill="#ffffff" />
<rect x="842" y="220" width="1" height="16" fill="#fbfbfb" />
<rect x="857" y="220" width="1" height="16" fill="#d8d8d8" />
<rect x="858" y="220" width="1" height="16" fill="#c4c4c4" />
<rect x="859" y="220" width="1" height="16" fill="#e0e0e0" />
<rect x="842" y="235" width="16" height="1" fill="#d6d6d6" />
<rect x="842" y="236" width="18" height="1" fill="#a0a0a0" />
<line x1="860" y1="236.5" x2="1131" y2="236.5" stroke="#a0a0a0" stroke-width="1" stroke-dasharray="1 1"/>
<text transform="translate(863,232) scale(0.9167,1)" x="0" y="0" font-size="12" fill="#000" >6-1500</text>
<text transform="translate(927,232) scale(0.9167,1)" x="0" y="0" font-size="12" fill="#000" >Bad Debts</text>
<rect x="860" y="237" width="271" height="16" fill="#f8f8d8" />
<rect x="842" y="237" width="18" height="16" fill="url(#rh)" />
<rect x="842" y="237" width="16" height="1" fill="#ffffff" />
<rect x="842" y="237" width="1" height="16" fill="#fbfbfb" />
<rect x="857" y="237" width="1" height="16" fill="#d8d8d8" />
<rect x="858" y="237" width="1" height="16" fill="#c4c4c4" />
<rect x="859" y="237" width="1" height="16" fill="#e0e0e0" />
<rect x="842" y="252" width="16" height="1" fill="#d6d6d6" />
<rect x="842" y="253" width="18" height="1" fill="#a0a0a0" />
<line x1="860" y1="253.5" x2="1131" y2="253.5" stroke="#a0a0a0" stroke-width="1" stroke-dasharray="1 1"/>
<text transform="translate(863,249) scale(0.9167,1)" x="0" y="0" font-size="12" fill="#000" >6-1400</text>
<text transform="translate(927,249) scale(0.9167,1)" x="0" y="0" font-size="12" fill="#000" >Borrowing Expenses</text>
<rect x="860" y="254" width="271" height="16" fill="#fff" />
<rect x="842" y="254" width="18" height="16" fill="url(#rh)" />
<rect x="842" y="254" width="16" height="1" fill="#ffffff" />
<rect x="842" y="254" width="1" height="16" fill="#fbfbfb" />
<rect x="857" y="254" width="1" height="16" fill="#d8d8d8" />
<rect x="858" y="254" width="1" height="16" fill="#c4c4c4" />
<rect x="859" y="254" width="1" height="16" fill="#e0e0e0" />
<rect x="842" y="269" width="16" height="1" fill="#d6d6d6" />
<rect x="842" y="270" width="18" height="1" fill="#a0a0a0" />
<line x1="860" y1="270.5" x2="1131" y2="270.5" stroke="#a0a0a0" stroke-width="1" stroke-dasharray="1 1"/>
<text transform="translate(863,266) scale(0.9167,1)" x="0" y="0" font-size="12" fill="#000" >6-1600</text>
<text transform="translate(927,266) scale(0.9167,1)" x="0" y="0" font-size="12" fill="#000" >Cleaning Expenses</text>
<rect x="860" y="271" width="271" height="16" fill="#f8f8d8" />
<rect x="842" y="271" width="18" height="16" fill="url(#rh)" />
<rect x="842" y="271" width="16" height="1" fill="#ffffff" />
<rect x="842" y="271" width="1" height="16" fill="#fbfbfb" />
<rect x="857" y="271" width="1" height="16" fill="#d8d8d8" />
<rect x="858" y="271" width="1" height="16" fill="#c4c4c4" />
<rect x="859" y="271" width="1" height="16" fill="#e0e0e0" />
<rect x="842" y="286" width="16" height="1" fill="#d6d6d6" />
<rect x="842" y="287" width="18" height="1" fill="#a0a0a0" />
<line x1="860" y1="287.5" x2="1131" y2="287.5" stroke="#a0a0a0" stroke-width="1" stroke-dasharray="1 1"/>
<text transform="translate(863,283) scale(0.9167,1)" x="0" y="0" font-size="12" fill="#000" >6-5300</text>
<text transform="translate(927,283) scale(0.9167,1)" x="0" y="0" font-size="12" fill="#000" >Computer Depreciation</text>
<rect x="860" y="288" width="271" height="16" fill="#fff" />
<rect x="842" y="288" width="18" height="16" fill="url(#rh)" />
<rect x="842" y="288" width="16" height="1" fill="#ffffff" />
<rect x="842" y="288" width="1" height="16" fill="#fbfbfb" />
<rect x="857" y="288" width="1" height="16" fill="#d8d8d8" />
<rect x="858" y="288" width="1" height="16" fill="#c4c4c4" />
<rect x="859" y="288" width="1" height="16" fill="#e0e0e0" />
<rect x="842" y="303" width="16" height="1" fill="#d6d6d6" />
<rect x="842" y="304" width="18" height="1" fill="#a0a0a0" />
<line x1="860" y1="304.5" x2="1131" y2="304.5" stroke="#a0a0a0" stroke-width="1" stroke-dasharray="1 1"/>
<text transform="translate(863,300) scale(0.9167,1)" x="0" y="0" font-size="12" fill="#000" >6-2400</text>
<text transform="translate(927,300) scale(0.9167,1)" x="0" y="0" font-size="12" fill="#000" >Computer Expenses</text>
<rect x="860" y="305" width="271" height="16" fill="#f8f8d8" />
<rect x="842" y="305" width="18" height="16" fill="url(#rh)" />
<rect x="842" y="305" width="16" height="1" fill="#ffffff" />
<rect x="842" y="305" width="1" height="16" fill="#fbfbfb" />
<rect x="857" y="305" width="1" height="16" fill="#d8d8d8" />
<rect x="858" y="305" width="1" height="16" fill="#c4c4c4" />
<rect x="859" y="305" width="1" height="16" fill="#e0e0e0" />
<rect x="842" y="320" width="16" height="1" fill="#d6d6d6" />
<rect x="842" y="321" width="18" height="1" fill="#a0a0a0" />
<line x1="860" y1="321.5" x2="1131" y2="321.5" stroke="#a0a0a0" stroke-width="1" stroke-dasharray="1 1"/>
<text transform="translate(863,317) scale(0.9167,1)" x="0" y="0" font-size="12" fill="#000" >6-2500</text>
<text transform="translate(927,317) scale(0.9167,1)" x="0" y="0" font-size="12" fill="#000" >Council Rates</text>
<rect x="860" y="322" width="271" height="16" fill="#fff" />
<rect x="842" y="322" width="18" height="16" fill="url(#rh)" />
<rect x="842" y="322" width="16" height="1" fill="#ffffff" />
<rect x="842" y="322" width="1" height="16" fill="#fbfbfb" />
<rect x="857" y="322" width="1" height="16" fill="#d8d8d8" />
<rect x="858" y="322" width="1" height="16" fill="#c4c4c4" />
<rect x="859" y="322" width="1" height="16" fill="#e0e0e0" />
<rect x="842" y="337" width="16" height="1" fill="#d6d6d6" />
<rect x="842" y="338" width="18" height="1" fill="#a0a0a0" />
<line x1="860" y1="338.5" x2="1131" y2="338.5" stroke="#a0a0a0" stroke-width="1" stroke-dasharray="1 1"/>
<text transform="translate(863,334) scale(0.9167,1)" x="0" y="0" font-size="12" fill="#000" font-weight="bold" textLength="43.09" lengthAdjust="spacingAndGlyphs">6-5000</text>
<text transform="translate(927,334) scale(0.9167,1)" x="0" y="0" font-size="12" fill="#000" font-weight="bold" textLength="133.09" lengthAdjust="spacingAndGlyphs">Depreciation Expenses</text>
<rect x="860" y="339" width="271" height="16" fill="#f8f8d8" />
<rect x="842" y="339" width="18" height="16" fill="url(#rh)" />
<rect x="842" y="339" width="16" height="1" fill="#ffffff" />
<rect x="842" y="339" width="1" height="16" fill="#fbfbfb" />
<rect x="857" y="339" width="1" height="16" fill="#d8d8d8" />
<rect x="858" y="339" width="1" height="16" fill="#c4c4c4" />
<rect x="859" y="339" width="1" height="16" fill="#e0e0e0" />
<rect x="842" y="354" width="16" height="1" fill="#d6d6d6" />
<rect x="842" y="355" width="18" height="1" fill="#a0a0a0" />
<line x1="860" y1="355.5" x2="1131" y2="355.5" stroke="#a0a0a0" stroke-width="1" stroke-dasharray="1 1"/>
<text transform="translate(863,351) scale(0.9167,1)" x="0" y="0" font-size="12" fill="#000" >6-4500</text>
<text transform="translate(927,351) scale(0.9167,1)" x="0" y="0" font-size="12" fill="#000" >Director's Fees</text>
<rect x="860" y="356" width="271" height="16" fill="#fff" />
<rect x="842" y="356" width="18" height="16" fill="url(#rh)" />
<rect x="842" y="356" width="16" height="1" fill="#ffffff" />
<rect x="842" y="356" width="1" height="16" fill="#fbfbfb" />
<rect x="857" y="356" width="1" height="16" fill="#d8d8d8" />
<rect x="858" y="356" width="1" height="16" fill="#c4c4c4" />
<rect x="859" y="356" width="1" height="16" fill="#e0e0e0" />
<rect x="842" y="371" width="16" height="1" fill="#d6d6d6" />
<rect x="842" y="372" width="18" height="1" fill="#a0a0a0" />
<line x1="860" y1="372.5" x2="1131" y2="372.5" stroke="#a0a0a0" stroke-width="1" stroke-dasharray="1 1"/>
<text transform="translate(863,368) scale(0.9167,1)" x="0" y="0" font-size="12" fill="#000" >6-3300</text>
<text transform="translate(927,368) scale(0.9167,1)" x="0" y="0" font-size="12" fill="#000" >Discounts Given</text>
<rect x="860" y="373" width="271" height="16" fill="#f8f8d8" />
<rect x="842" y="373" width="18" height="16" fill="url(#rh)" />
<rect x="842" y="373" width="16" height="1" fill="#ffffff" />
<rect x="842" y="373" width="1" height="16" fill="#fbfbfb" />
<rect x="857" y="373" width="1" height="16" fill="#d8d8d8" />
<rect x="858" y="373" width="1" height="16" fill="#c4c4c4" />
<rect x="859" y="373" width="1" height="16" fill="#e0e0e0" />
<rect x="842" y="388" width="16" height="1" fill="#d6d6d6" />
<rect x="842" y="389" width="18" height="1" fill="#a0a0a0" />
<line x1="860" y1="389.5" x2="1131" y2="389.5" stroke="#a0a0a0" stroke-width="1" stroke-dasharray="1 1"/>
<text transform="translate(863,385) scale(0.9167,1)" x="0" y="0" font-size="12" fill="#000" >6-1700</text>
<text transform="translate(927,385) scale(0.9167,1)" x="0" y="0" font-size="12" fill="#000" >Electricity Expenses</text>
<rect x="860" y="390" width="271" height="16" fill="#fff" />
<rect x="842" y="390" width="18" height="16" fill="url(#rh)" />
<rect x="842" y="390" width="16" height="1" fill="#ffffff" />
<rect x="842" y="390" width="1" height="16" fill="#fbfbfb" />
<rect x="857" y="390" width="1" height="16" fill="#d8d8d8" />
<rect x="858" y="390" width="1" height="16" fill="#c4c4c4" />
<rect x="859" y="390" width="1" height="16" fill="#e0e0e0" />
<rect x="842" y="405" width="16" height="1" fill="#d6d6d6" />
<rect x="842" y="406" width="18" height="1" fill="#a0a0a0" />
<line x1="860" y1="406.5" x2="1131" y2="406.5" stroke="#a0a0a0" stroke-width="1" stroke-dasharray="1 1"/>
<text transform="translate(863,402) scale(0.9167,1)" x="0" y="0" font-size="12" fill="#000" >6-4700</text>
<text transform="translate(927,402) scale(0.9167,1)" x="0" y="0" font-size="12" fill="#000" >Food</text>
<rect x="860" y="407" width="271" height="16" fill="#f8f8d8" />
<rect x="842" y="407" width="18" height="16" fill="url(#rh)" />
<rect x="842" y="407" width="16" height="1" fill="#ffffff" />
<rect x="842" y="407" width="1" height="16" fill="#fbfbfb" />
<rect x="857" y="407" width="1" height="16" fill="#d8d8d8" />
<rect x="858" y="407" width="1" height="16" fill="#c4c4c4" />
<rect x="859" y="407" width="1" height="16" fill="#e0e0e0" />
<rect x="842" y="422" width="16" height="1" fill="#d6d6d6" />
<rect x="842" y="423" width="18" height="1" fill="#a0a0a0" />
<line x1="860" y1="423.5" x2="1131" y2="423.5" stroke="#a0a0a0" stroke-width="1" stroke-dasharray="1 1"/>
<text transform="translate(863,419) scale(0.9167,1)" x="0" y="0" font-size="12" fill="#000" >6-3100</text>
<text transform="translate(927,419) scale(0.9167,1)" x="0" y="0" font-size="12" fill="#000" >Freight Out</text>
<rect x="860" y="424" width="271" height="16" fill="#fff" />
<rect x="842" y="424" width="18" height="16" fill="url(#rh)" />
<rect x="842" y="424" width="16" height="1" fill="#ffffff" />
<rect x="842" y="424" width="1" height="16" fill="#fbfbfb" />
<rect x="857" y="424" width="1" height="16" fill="#d8d8d8" />
<rect x="858" y="424" width="1" height="16" fill="#c4c4c4" />
<rect x="859" y="424" width="1" height="16" fill="#e0e0e0" />
<rect x="842" y="439" width="16" height="1" fill="#d6d6d6" />
<rect x="842" y="440" width="18" height="1" fill="#a0a0a0" />
<line x1="860" y1="440.5" x2="1131" y2="440.5" stroke="#a0a0a0" stroke-width="1" stroke-dasharray="1 1"/>
<text transform="translate(863,436) scale(0.9167,1)" x="0" y="0" font-size="12" fill="#000" >6-5100</text>
<text transform="translate(927,436) scale(0.9167,1)" x="0" y="0" font-size="12" fill="#000" >Furniture Depreciation</text>
<rect x="860" y="441" width="271" height="16" fill="#f8f8d8" />
<rect x="842" y="441" width="18" height="16" fill="url(#rh)" />
<rect x="842" y="441" width="16" height="1" fill="#ffffff" />
<rect x="842" y="441" width="1" height="16" fill="#fbfbfb" />
<rect x="857" y="441" width="1" height="16" fill="#d8d8d8" />
<rect x="858" y="441" width="1" height="16" fill="#c4c4c4" />
<rect x="859" y="441" width="1" height="16" fill="#e0e0e0" />
<rect x="842" y="456" width="16" height="1" fill="#d6d6d6" />
<rect x="842" y="457" width="18" height="1" fill="#a0a0a0" />
<line x1="860" y1="457.5" x2="1131" y2="457.5" stroke="#a0a0a0" stroke-width="1" stroke-dasharray="1 1"/>
<text transform="translate(863,453) scale(0.9167,1)" x="0" y="0" font-size="12" fill="#000" >6-1800</text>
<text transform="translate(927,453) scale(0.9167,1)" x="0" y="0" font-size="12" fill="#000" >Gas Expenses</text>
<rect x="860" y="458" width="271" height="16" fill="#fff" />
<rect x="842" y="458" width="18" height="16" fill="url(#rh)" />
<rect x="842" y="458" width="16" height="1" fill="#ffffff" />
<rect x="842" y="458" width="1" height="16" fill="#fbfbfb" />
<rect x="857" y="458" width="1" height="16" fill="#d8d8d8" />
<rect x="858" y="458" width="1" height="16" fill="#c4c4c4" />
<rect x="859" y="458" width="1" height="16" fill="#e0e0e0" />
<rect x="842" y="473" width="16" height="1" fill="#d6d6d6" />
<rect x="842" y="474" width="18" height="1" fill="#a0a0a0" />
<line x1="860" y1="474.5" x2="1131" y2="474.5" stroke="#a0a0a0" stroke-width="1" stroke-dasharray="1 1"/>
<text transform="translate(863,470) scale(0.9167,1)" x="0" y="0" font-size="12" fill="#000" >6-2100</text>
<text transform="translate(927,470) scale(0.9167,1)" x="0" y="0" font-size="12" fill="#000" >General Repairs &amp; Maintenance</text>
<rect x="860" y="475" width="271" height="16" fill="#f8f8d8" />
<rect x="842" y="475" width="18" height="16" fill="url(#rh)" />
<rect x="842" y="475" width="16" height="1" fill="#ffffff" />
<rect x="842" y="475" width="1" height="16" fill="#fbfbfb" />
<rect x="857" y="475" width="1" height="16" fill="#d8d8d8" />
<rect x="858" y="475" width="1" height="16" fill="#c4c4c4" />
<rect x="859" y="475" width="1" height="16" fill="#e0e0e0" />
<rect x="842" y="490" width="16" height="1" fill="#d6d6d6" />
<rect x="842" y="491" width="18" height="1" fill="#a0a0a0" />
<line x1="860" y1="491.5" x2="1131" y2="491.5" stroke="#a0a0a0" stroke-width="1" stroke-dasharray="1 1"/>
<text transform="translate(863,487) scale(0.9167,1)" x="0" y="0" font-size="12" fill="#000" >6-2350</text>
<text transform="translate(927,487) scale(0.9167,1)" x="0" y="0" font-size="12" fill="#000" >Insurance</text>
<rect x="860" y="492" width="271" height="16" fill="#fff" />
<rect x="842" y="492" width="18" height="16" fill="url(#rh)" />
<rect x="842" y="492" width="16" height="1" fill="#ffffff" />
<rect x="842" y="492" width="1" height="16" fill="#fbfbfb" />
<rect x="857" y="492" width="1" height="16" fill="#d8d8d8" />
<rect x="858" y="492" width="1" height="16" fill="#c4c4c4" />
<rect x="859" y="492" width="1" height="16" fill="#e0e0e0" />
<rect x="842" y="507" width="16" height="1" fill="#d6d6d6" />
<rect x="842" y="508" width="18" height="1" fill="#a0a0a0" />
<line x1="860" y1="508.5" x2="1131" y2="508.5" stroke="#a0a0a0" stroke-width="1" stroke-dasharray="1 1"/>
<text transform="translate(863,504) scale(0.9167,1)" x="0" y="0" font-size="12" fill="#000" >6-2300</text>
<text transform="translate(927,504) scale(0.9167,1)" x="0" y="0" font-size="12" fill="#000" >Internet</text>
<rect x="860" y="509" width="271" height="16" fill="#f8f8d8" />
<rect x="842" y="509" width="18" height="16" fill="url(#rh)" />
<rect x="842" y="509" width="16" height="1" fill="#ffffff" />
<rect x="842" y="509" width="1" height="16" fill="#fbfbfb" />
<rect x="857" y="509" width="1" height="16" fill="#d8d8d8" />
<rect x="858" y="509" width="1" height="16" fill="#c4c4c4" />
<rect x="859" y="509" width="1" height="16" fill="#e0e0e0" />
<rect x="842" y="524" width="16" height="1" fill="#d6d6d6" />
<rect x="842" y="525" width="18" height="1" fill="#a0a0a0" />
<line x1="860" y1="525.5" x2="1131" y2="525.5" stroke="#a0a0a0" stroke-width="1" stroke-dasharray="1 1"/>
<text transform="translate(863,521) scale(0.9167,1)" x="0" y="0" font-size="12" fill="#000" >6-3200</text>
<text transform="translate(927,521) scale(0.9167,1)" x="0" y="0" font-size="12" fill="#000" >Late Fees Paid</text>
<rect x="860" y="526" width="271" height="9" fill="#fff" />
<rect x="842" y="526" width="18" height="9" fill="url(#rh)" />
<rect x="842" y="526" width="16" height="1" fill="#ffffff" />
<rect x="842" y="526" width="1" height="9" fill="#fbfbfb" />
<rect x="857" y="526" width="1" height="9" fill="#d8d8d8" />
<rect x="858" y="526" width="1" height="9" fill="#c4c4c4" />
<rect x="859" y="526" width="1" height="9" fill="#e0e0e0" />
<text transform="translate(863,538) scale(0.9167,1)" x="0" y="0" font-size="12" fill="#000" >6-1900</text>
<text transform="translate(927,538) scale(0.9167,1)" x="0" y="0" font-size="12" fill="#000" >Legal Fees</text>
<line x1="923.5" y1="186" x2="923.5" y2="535" stroke="#a0a0a0" stroke-width="1" stroke-dasharray="1 1"/>
<line x1="1130.5" y1="186" x2="1130.5" y2="535" stroke="#a0a0a0" stroke-width="1" stroke-dasharray="1 1"/>
<path d="M847,190 L852,194 L847,198 z" fill="#a0a0a0"/>
<rect x="1131" y="166" width="17" height="369" fill="#f0f0f0" />
<rect x="1132" y="183" width="15" height="171" fill="#cdcdcd" />
<path d="M1136,178 L1139.5,174 L1143,178" fill="none" stroke="#606060" stroke-width="1.6"/>
<path d="M1136,525 L1139.5,529 L1143,525" fill="none" stroke="#606060" stroke-width="1.6"/>
<rect x="841" y="535" width="308" height="32" fill="#e3e3e3" />
<rect x="841" y="535" width="308" height="1" fill="#696969" />
<rect x="841" y="566" width="308" height="1" fill="#696969" />
<rect x="841" y="535" width="1" height="32" fill="#696969" />
<rect x="1148" y="535" width="1" height="32" fill="#696969" />
<rect x="844" y="541" width="193" height="20" fill="#fff" />
<rect x="844" y="541" width="193" height="1" fill="#b9b9b9" />
<rect x="844" y="560" width="193" height="1" fill="#b9b9b9" />
<rect x="844" y="541" width="1" height="20" fill="#b9b9b9" />
<rect x="1036" y="541" width="1" height="20" fill="#b9b9b9" />
<rect x="845" y="542" width="191" height="1" fill="#d9d9d9" />
<rect x="845" y="559" width="191" height="1" fill="#d9d9d9" />
<rect x="845" y="542" width="1" height="18" fill="#d9d9d9" />
<rect x="1035" y="542" width="1" height="18" fill="#d9d9d9" />
<rect x="1019" y="542" width="17" height="18" fill="#e6e6e6" />
<rect x="1019" y="542" width="17" height="1" fill="#b9b9b9" />
<rect x="1019" y="559" width="17" height="1" fill="#b9b9b9" />
<rect x="1019" y="542" width="1" height="18" fill="#b9b9b9" />
<rect x="1035" y="542" width="1" height="18" fill="#b9b9b9" />
<path d="M1023.5,549.0 L1027.5,553.0 L1031.5,549.0" fill="none" stroke="#404040" stroke-width="1.1"/>
<text transform="translate(846,555) scale(0.9167,1)" x="0" y="0" font-size="12" fill="#000" textLength="122.18">Display account codes</text>
<text transform="translate(1045,555) scale(0.9167,1)" x="0" y="0" font-size="12" fill="#0000ff" text-decoration="underline" textLength="102.00">Edit  Range Setting</text>
<rect x="995" y="597" width="75" height="24" fill="url(#btn)"/>
<rect x="995" y="597" width="75" height="1" fill="#adadad" />
<rect x="995" y="620" width="75" height="1" fill="#adadad" />
<rect x="995" y="597" width="1" height="24" fill="#adadad" />
<rect x="1069" y="597" width="1" height="24" fill="#adadad" />
<text transform="translate(1024,613) scale(0.9167,1)" x="0" y="0" font-size="12" fill="#000" >OK</text>
<rect x="1076" y="597" width="75" height="24" fill="url(#btn)"/>
<rect x="1076" y="597" width="75" height="1" fill="#adadad" />
<rect x="1076" y="620" width="75" height="1" fill="#adadad" />
<rect x="1076" y="597" width="1" height="24" fill="#adadad" />
<rect x="1150" y="597" width="1" height="24" fill="#adadad" />
<text transform="translate(1096,613) scale(0.9167,1)" x="0" y="0" font-size="12" fill="#000" >Cancel</text>
<rect x="1166" y="620" width="2" height="2" fill="#a8a8a8" />
<rect x="1163" y="623" width="2" height="2" fill="#a8a8a8" />
<rect x="1166" y="623" width="2" height="2" fill="#a8a8a8" />
<rect x="1160" y="626" width="2" height="2" fill="#a8a8a8" />
<rect x="1163" y="626" width="2" height="2" fill="#a8a8a8" />
<rect x="1166" y="626" width="2" height="2" fill="#a8a8a8" />
<text x="221" y="31" font-size="19" fill="#e6007e" >Chart of Accounts</text>
<text x="575" y="30" font-size="19" fill="#e6007e" >Account Group Details</text>
<text x="875" y="31" font-size="19" fill="#e6007e" >Accounts allocated to group</text>
<path d="M159,106 L132,106 L132,540 L159,540" fill="none" stroke="#e6007e" stroke-width="3" stroke-linecap="round" stroke-linejoin="miter"/>
<path d="M46,329 L132,329" fill="none" stroke="#e6007e" stroke-width="3" stroke-linecap="round" stroke-linejoin="miter"/>
<text x="27" y="336" font-size="24" fill="#e6007e" font-weight="bold" >A</text>
<path d="M53,551.5 L140,551.5" fill="none" stroke="#e6007e" stroke-width="3" stroke-linecap="round" stroke-linejoin="miter"/>
<text x="37" y="559" font-size="24" fill="#e6007e" font-weight="bold" >B</text>
<path d="M89,580.5 L132,580.5" fill="none" stroke="#e6007e" stroke-width="3" stroke-linecap="round" stroke-linejoin="miter"/>
<text x="71" y="589" font-size="24" fill="#e6007e" font-weight="bold" >C</text>
<path d="M74,608.5 L126,608.5" fill="none" stroke="#e6007e" stroke-width="3" stroke-linecap="round" stroke-linejoin="miter"/>
<text x="56" y="617" font-size="24" fill="#e6007e" font-weight="bold" >D</text>
<path d="M355.5,498 L355.5,547" fill="none" stroke="#e6007e" stroke-width="3" stroke-linecap="round" stroke-linejoin="miter"/>
<text x="349" y="492" font-size="24" fill="#e6007e" font-weight="bold" >E</text>
<path d="M373,608 L437,608" fill="none" stroke="#e6007e" stroke-width="3" stroke-linecap="round" stroke-linejoin="miter"/>
<text x="443" y="618" font-size="24" fill="#e6007e" font-weight="bold" >F</text>
<path d="M461,51 L461,114" fill="none" stroke="#e6007e" stroke-width="3" stroke-linecap="round" stroke-linejoin="miter"/>
<text x="451" y="47" font-size="24" fill="#e6007e" font-weight="bold" >G</text>
<path d="M525,553 L525,576 L822,576 L822,553" fill="none" stroke="#e6007e" stroke-width="3" stroke-linecap="round" stroke-linejoin="miter"/>
<path d="M671,576 L671,602" fill="none" stroke="#e6007e" stroke-width="3" stroke-linecap="round" stroke-linejoin="miter"/>
<text x="662" y="621" font-size="24" fill="#e6007e" font-weight="bold" >H</text>
<path d="M764,67 L764,99" fill="none" stroke="#e6007e" stroke-width="3" stroke-linecap="round" stroke-linejoin="miter"/>
<text x="762" y="56" font-size="24" fill="#e6007e" font-weight="bold" >I</text>
<path d="M856,558 L856,593" fill="none" stroke="#e6007e" stroke-width="3" stroke-linecap="round" stroke-linejoin="miter"/>
<text x="853" y="611" font-size="24" fill="#e6007e" font-weight="bold" >J</text>
<path d="M1114,159 L1164,159 L1164,541 L1110,541" fill="none" stroke="#e6007e" stroke-width="3" stroke-linecap="round" stroke-linejoin="miter"/>
<path d="M1164,356 L1196,356" fill="none" stroke="#e6007e" stroke-width="3" stroke-linecap="round" stroke-linejoin="miter"/>
<text x="1202" y="362" font-size="24" fill="#e6007e" font-weight="bold" >K</text>
<path d="M1142,551 L1203,551" fill="none" stroke="#e6007e" stroke-width="3" stroke-linecap="round" stroke-linejoin="miter"/>
<text x="1207" y="555" font-size="24" fill="#e6007e" font-weight="bold" >L</text>
</svg></body></html>
